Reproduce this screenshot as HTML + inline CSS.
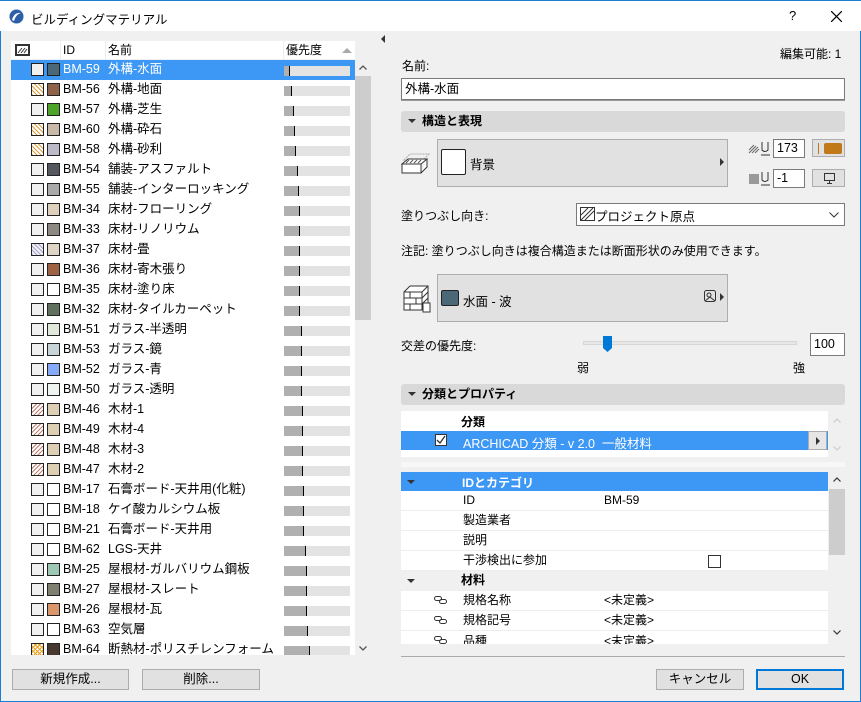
<!DOCTYPE html>
<html><head><meta charset="utf-8">
<style>
*{margin:0;padding:0;box-sizing:border-box}
body{width:861px;height:702px;overflow:hidden;background:#f0f0f0;font-family:"Liberation Sans","Noto Sans CJK JP",sans-serif;font-size:12px;color:#000;position:relative}
.a{position:absolute}
.win{left:0;top:0;width:861px;height:702px;border:1px solid #1a7fd4;border-top:none}
.title{left:0;top:0;width:861px;height:31px;background:#fff;border-top:1px solid #1a7fd4}
.list{left:11px;top:41px;width:344px;height:614px;background:#fff;overflow:hidden}
.row{position:absolute;left:0;width:344px;height:20px;line-height:20px}
.row .c{position:absolute;left:20px;top:3px;width:13px;height:13px;border:1px solid #222;background:#f0f0f0}
.row .s{position:absolute;left:36px;top:3px;width:13px;height:13px;border:1px solid #222}
.row .id{position:absolute;left:52px;top:-1px;font-size:12.5px;height:20px;line-height:20px}
.row .n{position:absolute;left:97px;top:-1px;font-size:12.5px;height:20px;line-height:20px}
.row .b{position:absolute;left:273px;top:6px;width:66px;height:10px;background:#e3e3e3}
.row .b i{position:absolute;left:0;top:0;height:10px;background:#b0b0b0;border-right:1px solid #000}
.sel{background:#3c97f5;color:#fff}
.p1{background:repeating-linear-gradient(45deg,#e0a040 0 1px,#fff 1px 3px),#fff!important}
.p2{background:repeating-linear-gradient(-45deg,#c08070 0 1px,#fff 1px 3px)!important}
.p3{background:repeating-linear-gradient(45deg,#aab 0 1px,#eef 1px 3px)!important}
.p4{background:repeating-linear-gradient(45deg,#e8a020 0 1px,transparent 1px 3px),repeating-linear-gradient(-45deg,#e8a020 0 1px,#fff 1px 3px)!important}
.btn{position:absolute;background:#e1e1e1;border:1px solid #adadad;text-align:center;line-height:19px;font-size:12.5px}
.sec{position:absolute;left:401px;width:444px;height:21px;background:#d9d9d9;border-radius:3px;font-weight:bold;line-height:21px;padding-left:21px}
.sec:before{content:"";position:absolute;left:7px;top:8px;border-left:4px solid transparent;border-right:4px solid transparent;border-top:4px solid #333}
.inp{position:absolute;background:#fff;border:1px solid #7a7a7a;padding-left:3px}
.pr{position:absolute;left:401px;width:427px;height:20px;background:#fff;border-bottom:1px solid #eee;line-height:19px}
.pr span{position:absolute;top:0}
.lk{position:absolute;left:33px;top:5px}
</style></head><body>
<div class="a win"></div>
<div class="a title">
 <svg class="a" style="left:9px;top:8px" width="15" height="15" viewBox="0 0 15 15"><circle cx="7.5" cy="7.5" r="7" fill="#2d5fa8"/><path d="M3 11 Q5 3 12 4 Q7 5 5 12Z" fill="#fff"/></svg>
 <div class="a" style="left:31px;top:8px;font-size:12.5px">ビルディングマテリアル</div>
 <div class="a" style="left:789px;top:7px;font-size:13px">?</div>
 <svg class="a" style="left:831px;top:10px" width="11" height="11"><path d="M0 0L11 11M11 0L0 11" stroke="#000" stroke-width="1.2"/></svg>
</div>

<div class="a list">
 <div class="row" style="top:0;height:19px;border-bottom:1px solid #f0f0f0;line-height:19px">
  <svg class="a" style="left:4px;top:3px" width="15" height="12"><rect x="1" y="1" width="13" height="10" fill="#fff" stroke="#333" stroke-width="2"/><path d="M3 9L7 4M6 9L10 4M9 9L12 5" stroke="#333"/></svg>
  <div class="a" style="left:49px;top:0;width:1px;height:19px;background:#eee"></div>
  <div class="a" style="left:52px;top:0">ID</div>
  <div class="a" style="left:94px;top:0;width:1px;height:19px;background:#eee"></div>
  <div class="a" style="left:97px;top:0">名前</div>
  <div class="a" style="left:272px;top:0;width:1px;height:19px;background:#eee"></div>
  <div class="a" style="left:275px;top:0">優先度</div>
  <div class="a" style="left:331px;top:7px;border-left:5px solid transparent;border-right:5px solid transparent;border-bottom:5px solid #aaa"></div>
 </div>
 <div class="row sel" style="top:19px"><div class="c"></div><div class="s" style="background:#4b6878"></div><div class="id">BM-59</div><div class="n">外構-水面</div><div class="b"><i style="width:6px"></i></div></div>
 <div class="row" style="top:39px"><div class="c p1"></div><div class="s" style="background:#8e6248"></div><div class="id">BM-56</div><div class="n">外構-地面</div><div class="b"><i style="width:8px"></i></div></div>
 <div class="row" style="top:59px"><div class="c"></div><div class="s" style="background:#4ea32a"></div><div class="id">BM-57</div><div class="n">外構-芝生</div><div class="b"><i style="width:10px"></i></div></div>
 <div class="row" style="top:79px"><div class="c p1"></div><div class="s" style="background:#c8b8a8"></div><div class="id">BM-60</div><div class="n">外構-砕石</div><div class="b"><i style="width:11px"></i></div></div>
 <div class="row" style="top:99px"><div class="c p1"></div><div class="s" style="background:#bcbac6"></div><div class="id">BM-58</div><div class="n">外構-砂利</div><div class="b"><i style="width:12px"></i></div></div>
 <div class="row" style="top:119px"><div class="c"></div><div class="s" style="background:#54575e"></div><div class="id">BM-54</div><div class="n">舗装-アスファルト</div><div class="b"><i style="width:14px"></i></div></div>
 <div class="row" style="top:139px"><div class="c"></div><div class="s" style="background:#aaa"></div><div class="id">BM-55</div><div class="n">舗装-インターロッキング</div><div class="b"><i style="width:15px"></i></div></div>
 <div class="row" style="top:159px"><div class="c"></div><div class="s" style="background:#ddd0bc"></div><div class="id">BM-34</div><div class="n">床材-フローリング</div><div class="b"><i style="width:16px"></i></div></div>
 <div class="row" style="top:179px"><div class="c"></div><div class="s" style="background:#8c8882"></div><div class="id">BM-33</div><div class="n">床材-リノリウム</div><div class="b"><i style="width:16px"></i></div></div>
 <div class="row" style="top:199px"><div class="c p3"></div><div class="s" style="background:#dcd4c4"></div><div class="id">BM-37</div><div class="n">床材-畳</div><div class="b"><i style="width:16px"></i></div></div>
 <div class="row" style="top:219px"><div class="c"></div><div class="s" style="background:#9e6244"></div><div class="id">BM-36</div><div class="n">床材-寄木張り</div><div class="b"><i style="width:16px"></i></div></div>
 <div class="row" style="top:239px"><div class="c"></div><div class="s" style="background:#fff"></div><div class="id">BM-35</div><div class="n">床材-塗り床</div><div class="b"><i style="width:16px"></i></div></div>
 <div class="row" style="top:259px"><div class="c"></div><div class="s" style="background:#627060"></div><div class="id">BM-32</div><div class="n">床材-タイルカーペット</div><div class="b"><i style="width:16px"></i></div></div>
 <div class="row" style="top:279px"><div class="c"></div><div class="s" style="background:#e0e8dc"></div><div class="id">BM-51</div><div class="n">ガラス-半透明</div><div class="b"><i style="width:18px"></i></div></div>
 <div class="row" style="top:299px"><div class="c"></div><div class="s" style="background:#c8d4d8"></div><div class="id">BM-53</div><div class="n">ガラス-鏡</div><div class="b"><i style="width:18px"></i></div></div>
 <div class="row" style="top:319px"><div class="c"></div><div class="s" style="background:#86aaf8"></div><div class="id">BM-52</div><div class="n">ガラス-青</div><div class="b"><i style="width:18px"></i></div></div>
 <div class="row" style="top:339px"><div class="c"></div><div class="s" style="background:#eef4f0"></div><div class="id">BM-50</div><div class="n">ガラス-透明</div><div class="b"><i style="width:18px"></i></div></div>
 <div class="row" style="top:359px"><div class="c p2"></div><div class="s" style="background:#dccfb4"></div><div class="id">BM-46</div><div class="n">木材-1</div><div class="b"><i style="width:19px"></i></div></div>
 <div class="row" style="top:379px"><div class="c p2"></div><div class="s" style="background:#dccfb4"></div><div class="id">BM-49</div><div class="n">木材-4</div><div class="b"><i style="width:19px"></i></div></div>
 <div class="row" style="top:399px"><div class="c p2"></div><div class="s" style="background:#dccfb4"></div><div class="id">BM-48</div><div class="n">木材-3</div><div class="b"><i style="width:19px"></i></div></div>
 <div class="row" style="top:419px"><div class="c p2"></div><div class="s" style="background:#dccfb4"></div><div class="id">BM-47</div><div class="n">木材-2</div><div class="b"><i style="width:19px"></i></div></div>
 <div class="row" style="top:439px"><div class="c"></div><div class="s" style="background:#fff"></div><div class="id">BM-17</div><div class="n">石膏ボード-天井用(化粧)</div><div class="b"><i style="width:20px"></i></div></div>
 <div class="row" style="top:459px"><div class="c"></div><div class="s" style="background:#fff"></div><div class="id">BM-18</div><div class="n">ケイ酸カルシウム板</div><div class="b"><i style="width:20px"></i></div></div>
 <div class="row" style="top:479px"><div class="c"></div><div class="s" style="background:#fff"></div><div class="id">BM-21</div><div class="n">石膏ボード-天井用</div><div class="b"><i style="width:20px"></i></div></div>
 <div class="row" style="top:499px"><div class="c"></div><div class="s" style="background:#fff"></div><div class="id">BM-62</div><div class="n">LGS-天井</div><div class="b"><i style="width:22px"></i></div></div>
 <div class="row" style="top:519px"><div class="c"></div><div class="s" style="background:#9cc8b4"></div><div class="id">BM-25</div><div class="n">屋根材-ガルバリウム鋼板</div><div class="b"><i style="width:23px"></i></div></div>
 <div class="row" style="top:539px"><div class="c"></div><div class="s" style="background:#808070"></div><div class="id">BM-27</div><div class="n">屋根材-スレート</div><div class="b"><i style="width:23px"></i></div></div>
 <div class="row" style="top:559px"><div class="c"></div><div class="s" style="background:#d8966a"></div><div class="id">BM-26</div><div class="n">屋根材-瓦</div><div class="b"><i style="width:23px"></i></div></div>
 <div class="row" style="top:579px"><div class="c"></div><div class="s" style="background:#fff"></div><div class="id">BM-63</div><div class="n">空気層</div><div class="b"><i style="width:24px"></i></div></div>
 <div class="row" style="top:599px"><div class="c p4"></div><div class="s" style="background:#46382f"></div><div class="id">BM-64</div><div class="n">断熱材-ポリスチレンフォーム</div><div class="b"><i style="width:26px"></i></div></div>
</div>
<div class="a" style="left:355px;top:60px;width:16px;height:595px;background:#f0f0f0"></div>
<div class="a" style="left:355px;top:76px;width:16px;height:244px;background:#cdcdcd"></div>
<svg class="a" style="left:359px;top:65px" width="8" height="5"><path d="M0.5 4.5L4 1L7.5 4.5" fill="none" stroke="#555" stroke-width="1.3"/></svg>
<svg class="a" style="left:359px;top:646px" width="8" height="5"><path d="M0.5 0.5L4 4L7.5 0.5" fill="none" stroke="#555" stroke-width="1.3"/></svg>
<div class="btn" style="left:12px;top:669px;width:117px;height:21px">新規作成...</div>
<div class="btn" style="left:142px;top:669px;width:118px;height:21px">削除...</div>
<div class="a" style="left:381px;top:35px;border-top:4px solid transparent;border-bottom:4px solid transparent;border-right:4px solid #333"></div>

<!-- right -->
<div class="a" style="left:780px;top:45px;font-size:12px">編集可能: 1</div>
<div class="a" style="left:402px;top:57px">名前:</div>
<div class="inp" style="left:401px;top:78px;width:444px;height:22px;line-height:20px;font-size:12.5px">外構-水面</div>
<div class="a" style="left:401px;top:100px;width:444px;height:1px;background:#999"></div>
<div class="sec" style="top:111px">構造と表現</div>
<svg class="a" style="left:401px;top:150px" width="30" height="26"><path d="M3 10L9 4H28L22 10Z" fill="none" stroke="#aaa" stroke-dasharray="2 1"/><path d="M1 14L7 9H26L20 14Z M1 14V23H20V14 M20 23L26 17V9" fill="#fff" stroke="#333"/><path d="M5 13L8 10M9 13L12 10M13 13L16 10M17 13L20 10" stroke="#555"/></svg>
<div class="btn" style="left:437px;top:139px;width:291px;height:48px"></div>
<div class="a" style="left:441px;top:149px;width:25px;height:26px;background:#fff;border:1px solid #222;border-radius:2px"></div>
<div class="a" style="left:470px;top:154px;font-size:12.5px">背景</div>
<div class="a" style="left:720px;top:158px;border-top:4px solid transparent;border-bottom:4px solid transparent;border-left:4px solid #333"></div>
<svg class="a" style="left:748px;top:140px" width="24" height="18"><path d="M1 10L6 5M1 13L8 6M4 13L10 7M7 13L11 9" stroke="#666"/><path d="M14 2V10Q17 13 20 10V2M13 15H22" fill="none" stroke="#333"/></svg>
<div class="inp" style="left:773px;top:139px;width:32px;height:19px;line-height:17px;font-size:12.5px">173</div>
<div class="btn" style="left:812px;top:139px;width:33px;height:18px"><div class="a" style="left:5px;top:3px;width:1px;height:11px;background:#c07818"></div><div class="a" style="left:11px;top:3px;width:18px;height:11px;background:#c07818;border-radius:2px"></div></div>
<div class="a" style="left:749px;top:174px;width:10px;height:10px;background:#999"></div>
<svg class="a" style="left:760px;top:170px" width="12" height="18"><path d="M2 2V10Q5 13 8 10V2M1 15H10" fill="none" stroke="#333"/></svg>
<div class="inp" style="left:773px;top:169px;width:32px;height:19px;line-height:17px;font-size:12.5px">-1</div>
<div class="btn" style="left:812px;top:169px;width:33px;height:18px"><svg class="a" style="left:11px;top:3px" width="11" height="11"><rect x="0.5" y="0.5" width="10" height="7" fill="none" stroke="#333"/><path d="M5.5 8V10M3 10.5H8" stroke="#333"/></svg></div>
<div class="a" style="left:401px;top:207px">塗りつぶし向き:</div>
<div class="inp" style="left:576px;top:203px;width:269px;height:23px;border-color:#7a7a7a">
 <svg class="a" style="left:3px;top:3px" width="16" height="15"><rect x="0.5" y="0.5" width="14" height="13" fill="none" stroke="#333"/><path d="M1 8L8 1M1 13L13 1M5 13L14 4" stroke="#333"/></svg>
 <div class="a" style="left:18px;top:2px;font-size:12.5px">プロジェクト原点</div>
 <svg class="a" style="left:252px;top:8px" width="10" height="6"><path d="M0.5 0.5L5 5L9.5 0.5" fill="none" stroke="#333"/></svg>
</div>
<div class="a" style="left:401px;top:242px">注記: 塗りつぶし向きは複合構造または断面形状のみ使用できます。</div>
<svg class="a" style="left:401px;top:283px" width="32" height="32"><path d="M3 9L9 3H27V21L21 27H3Z M3 9H21V27 M21 9L27 3" fill="#fff" stroke="#333"/><path d="M3 15H21M3 21H21M9 9V15M15 15V21M9 21V27M21 15L27 9M21 21L27 15" stroke="#333"/><rect x="22" y="20" width="7" height="9" fill="#fff" stroke="#333"/></svg>
<div class="btn" style="left:437px;top:274px;width:291px;height:48px"></div>
<div class="a" style="left:441px;top:290px;width:18px;height:16px;background:#4b6878;border:1px solid #222;border-radius:2px"></div>
<div class="a" style="left:463px;top:291px;font-size:12.5px">水面 - 波</div>
<svg class="a" style="left:704px;top:290px" width="13" height="13"><rect x="0.5" y="0.5" width="11" height="11" rx="2" fill="none" stroke="#333"/><circle cx="5" cy="5" r="2" fill="none" stroke="#333"/><path d="M1 11L6 7L11 11" fill="none" stroke="#333"/></svg>
<div class="a" style="left:720px;top:293px;border-top:4px solid transparent;border-bottom:4px solid transparent;border-left:4px solid #333"></div>
<div class="a" style="left:401px;top:337px">交差の優先度:</div>
<div class="a" style="left:583px;top:341px;width:214px;height:4px;background:#e7e7e7;border:1px solid #d6d6d6"></div>
<svg class="a" style="left:603px;top:336px" width="10" height="17"><path d="M0 0H9V12L4.5 16L0 12Z" fill="#0078d7"/></svg>
<div class="inp" style="left:810px;top:333px;width:35px;height:23px;line-height:21px;font-size:12.5px">100</div>
<div class="a" style="left:577px;top:359px">弱</div>
<div class="a" style="left:793px;top:359px">強</div>
<div class="sec" style="top:384px">分類とプロパティ</div>
<div class="a" style="left:401px;top:411px;width:427px;height:46px;background:#fff"></div>
<div class="a" style="left:461px;top:413px;font-weight:bold">分類</div>
<div class="a" style="left:401px;top:431px;width:427px;height:19px;background:#3c97f5"></div>
<svg class="a" style="left:435px;top:434px" width="12" height="12"><rect x="0.5" y="0.5" width="11" height="11" fill="#fff" stroke="#333"/><path d="M2 6L5 9L10 2" fill="none" stroke="#333" stroke-width="1.3"/></svg>
<div class="a" style="left:463px;top:433px;color:#fff;font-size:12.5px">ARCHICAD 分類 - v 2.0&nbsp; 一般材料</div>
<div class="btn" style="left:808px;top:431px;width:19px;height:19px;background:#e6e6e6"><div class="a" style="left:7px;top:5px;border-top:4px solid transparent;border-bottom:4px solid transparent;border-left:4px solid #333"></div></div>
<svg class="a" style="left:833px;top:418px" width="8" height="5"><path d="M0.5 4.5L4 1L7.5 4.5" fill="none" stroke="#ccc" stroke-width="1.2"/></svg>
<svg class="a" style="left:833px;top:446px" width="8" height="5"><path d="M0.5 0.5L4 4L7.5 0.5" fill="none" stroke="#ccc" stroke-width="1.2"/></svg>
<div class="a" style="left:401px;top:462px;width:444px;height:5px;background:#f7f7f7"></div>
<div class="a" style="left:401px;top:472px;width:427px;height:19px;background:#3c97f5"></div>
<div class="a" style="left:407px;top:480px;border-left:4px solid transparent;border-right:4px solid transparent;border-top:4px solid #333"></div>
<div class="a" style="left:462px;top:474px;color:#fff;font-weight:bold">IDとカテゴリ</div>
<div class="pr" style="top:491px"><span style="left:62px">ID</span><span style="left:203px">BM-59</span></div>
<div class="pr" style="top:511px"><span style="left:62px">製造業者</span></div>
<div class="pr" style="top:531px"><span style="left:62px">説明</span></div>
<div class="pr" style="top:551px"><span style="left:62px">干渉検出に参加</span><div class="a" style="left:307px;top:4px;width:13px;height:13px;border:1px solid #333"></div></div>
<div class="pr" style="top:571px;background:#f0f0f0"><div class="a" style="left:6px;top:8px;border-left:4px solid transparent;border-right:4px solid transparent;border-top:4px solid #333"></div><span style="left:60px;font-weight:bold">材料</span></div>
<div class="pr" style="top:591px"><svg class="lk" width="13" height="8"><rect x="0.5" y="0.5" width="7" height="4" rx="2" fill="none" stroke="#333"/><rect x="5.5" y="3.5" width="7" height="4" rx="2" fill="none" stroke="#333"/></svg><span style="left:62px">規格名称</span><span style="left:203px">&lt;未定義&gt;</span></div>
<div class="pr" style="top:611px"><svg class="lk" width="13" height="8"><rect x="0.5" y="0.5" width="7" height="4" rx="2" fill="none" stroke="#333"/><rect x="5.5" y="3.5" width="7" height="4" rx="2" fill="none" stroke="#333"/></svg><span style="left:62px">規格記号</span><span style="left:203px">&lt;未定義&gt;</span></div>
<div class="a" style="left:401px;top:631px;width:427px;height:13px;background:#fff;overflow:hidden"><svg class="lk" width="13" height="8"><rect x="0.5" y="0.5" width="7" height="4" rx="2" fill="none" stroke="#333"/><rect x="5.5" y="3.5" width="7" height="4" rx="2" fill="none" stroke="#333"/></svg><span class="a" style="left:62px;top:1px">品種</span><span class="a" style="left:203px;top:1px">&lt;未定義&gt;</span></div>
<div class="a" style="left:829px;top:489px;width:16px;height:66px;background:#cdcdcd"></div>
<svg class="a" style="left:833px;top:477px" width="8" height="5"><path d="M0.5 4.5L4 1L7.5 4.5" fill="none" stroke="#333" stroke-width="1.2"/></svg>
<svg class="a" style="left:833px;top:630px" width="8" height="5"><path d="M0.5 0.5L4 4L7.5 0.5" fill="none" stroke="#333" stroke-width="1.2"/></svg>
<div class="a" style="left:401px;top:656px;width:444px;height:1px;background:#aaa"></div>
<div class="btn" style="left:656px;top:669px;width:88px;height:21px">キャンセル</div>
<div class="btn" style="left:756px;top:669px;width:88px;height:21px;border:2px solid #0078d7;line-height:17px">OK</div>
</body></html>
